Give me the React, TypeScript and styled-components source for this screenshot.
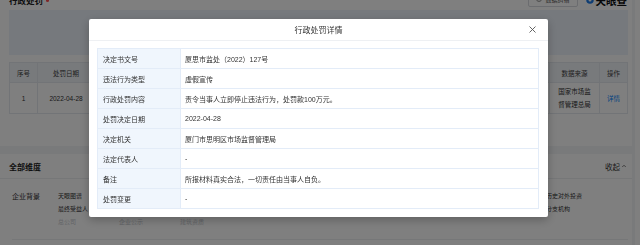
import React from "react";
import styled, { createGlobalStyle } from "styled-components";

const Global = createGlobalStyle`
  html, body { margin: 0; padding: 0; background: #f3f4f6; overflow: hidden; }
  body { font-family: "Liberation Sans", "Noto Sans CJK SC", sans-serif; color: #333; }
  * { box-sizing: border-box; }
`;

const Page = styled.div`
  display: flex;
  align-items: flex-start;
  gap: 3px;
  margin-top: -7px;
  height: 260px;
`;

const Main = styled.div`
  width: 632px;
  display: flex;
  flex-direction: column;
  gap: 8px;
`;

const Aside = styled.div`
  flex: 1;
  height: 270px;
  background: #fff;
`;

const Card = styled.div<{ $pad?: string }>`
  background: #fff;
  padding: ${(p) => p.$pad || "0"};
`;

const TitleRow = styled.div`
  height: 14px;
  display: flex;
  align-items: center;
  justify-content: space-between;
`;

const Title = styled.div`
  font-size: 8.5px;
  font-weight: 700;
  color: #222;
  display: flex;
  align-items: center;
  gap: 3px;
`;

const RedDot = styled.span`
  width: 3px;
  height: 3px;
  border-radius: 50%;
  background: #ff4d4f;
`;

const Tools = styled.div`
  display: flex;
  align-items: center;
  gap: 8px;
  padding-right: 1px;
`;

const OutlineButton = styled.div`
  height: 16px;
  margin-top: -2px;
  padding: 0 7px;
  border: 1px solid #d6d9de;
  border-radius: 2px;
  display: flex;
  align-items: center;
  gap: 3px;
  font-size: 6px;
  color: #555;
`;

const Logo = styled.div`
  display: flex;
  align-items: center;
  gap: 2px;
  font-size: 10.5px;
  font-weight: 700;
  color: #111;
`;

const FilterBox = styled.div`
  margin-top: 3px;
  height: 45px;
  background: #edf3fb;
`;

const GridTable = styled.div`
  margin-top: 7px;
  display: grid;
  grid-template-columns: 28px 57px 90px 80px 1fr 90px 50px 28px;
  border-top: 1px solid #e4e8ee;
  border-left: 1px solid #e4e8ee;
`;

const Th = styled.div`
  height: 20px;
  background: #f1f4f8;
  border-right: 1px solid #e4e8ee;
  border-bottom: 1px solid #e4e8ee;
  display: flex;
  align-items: center;
  justify-content: center;
  font-size: 6.5px;
  color: #444;
`;

const Td = styled.div<{ $link?: boolean }>`
  height: 31px;
  border-right: 1px solid #e4e8ee;
  border-bottom: 1px solid #e4e8ee;
  display: flex;
  align-items: center;
  justify-content: center;
  text-align: center;
  font-size: 6.5px;
  line-height: 13px;
  color: ${(p) => (p.$link ? "#0084ff" : "#333")};
  padding: 0 3px;
`;

const SectionHeader = styled.div`
  height: 25px;
  border-bottom: 1px solid #eceef1;
  display: flex;
  align-items: center;
  justify-content: space-between;
  padding: 0 5px 0 9px;
`;

const SectionTitle = styled.div`
  font-size: 8px;
  font-weight: 700;
  color: #222;
`;

const Collapse = styled.div`
  display: flex;
  align-items: center;
  gap: 1px;
  font-size: 7.5px;
  color: #333;
`;

const SectionBody = styled.div`
  padding: 11px 4px 20px 12px;
`;

const Group = styled.div`
  display: flex;
  padding-bottom: 10px;
  border-bottom: 1px solid #eceef1;
`;

const GroupLabel = styled.div`
  width: 46px;
  font-size: 7px;
  line-height: 13px;
  color: #333;
`;

const ItemGrid = styled.div`
  display: grid;
  grid-template-columns: repeat(9, 61px);
  grid-auto-rows: 13px;
`;

const Item = styled.div<{ $muted?: boolean }>`
  font-size: 6px;
  line-height: 13px;
  color: ${(p) => (p.$muted ? "#c4c7cc" : "#333")};
  white-space: nowrap;
`;

const Overlay = styled.div`
  position: fixed;
  inset: 0;
  background: rgba(0, 0, 0, 0.5);
  padding: 19px 0 0 89px;
`;

const Modal = styled.div`
  width: 459px;
  background: #fff;
  border-radius: 2px;
  box-shadow: 0 3px 10px rgba(0, 0, 0, 0.25);
`;

const ModalHeader = styled.div`
  position: relative;
  height: 22px;
  border-bottom: 1px solid #eef0f3;
  display: flex;
  align-items: center;
  justify-content: center;
  font-size: 8px;
  color: #333;
`;

const Close = styled.div`
  position: absolute;
  right: 12px;
  top: 7px;
  width: 7px;
  height: 7px;
  display: flex;
`;

const ModalBody = styled.div`
  padding: 7px 9px 8px 8px;
`;

const DetailTable = styled.div`
  display: grid;
  grid-template-columns: 83px 1fr;
  border-top: 1px solid #e3ecf8;
  border-left: 1px solid #e3ecf8;
`;

const DCell = styled.div<{ $label?: boolean }>`
  height: 20px;
  border-right: 1px solid #e3ecf8;
  border-bottom: 1px solid #e3ecf8;
  background: ${(p) => (p.$label ? "#f0f6fd" : "#fff")};
  display: flex;
  align-items: center;
  padding-left: ${(p) => (p.$label ? "5px" : "4px")};
  font-size: 7px;
  color: #333;
  white-space: nowrap;
`;

const details: [string, string][] = [
  ["决定书文号", "厦思市监处（2022）127号"],
  ["违法行为类型", "虚假宣传"],
  ["行政处罚内容", "责令当事人立即停止违法行为，处罚款100万元。"],
  ["处罚决定日期", "2022-04-28"],
  ["决定机关", "厦门市思明区市场监督管理局"],
  ["法定代表人", "-"],
  ["备注", "所报材料真实合法，一切责任由当事人自负。"],
  ["处罚变更", "-"],
];

const headers = ["序号", "处罚日期", "决定书文号", "违法行为类型", "行政处罚内容", "决定机关", "数据来源", "操作"];

const row1 = ["天眼图谱", "股东信息", "主要人员", "对外投资", "变更记录", "公司年报", "实际控制人", "疑似关系", "历史对外投资"];
const row2 = ["最终受益人", "分支机构", "工商信息", "控股企业", "股权穿透", "历史股东", "司法风险", "经营状况", "分支机构"];
const row3 = ["总公司", "企业公示", "建筑资质"];

export default function App() {
  return (
    <>
      <Global />
      <Page>
        <Main>
          <Card $pad="0 4px 32px 9px">
            <TitleRow>
              <Title>
                行政处罚
                <RedDot />
              </Title>
              <Tools>
                <OutlineButton>
                  <svg width="6" height="6" viewBox="0 0 12 12">
                    <circle cx="6" cy="6" r="5" fill="none" stroke="#666" strokeWidth="1.3" />
                    <path d="M6 3v3.5M6 8.3v.7" stroke="#666" strokeWidth="1.3" />
                  </svg>
                  数据纠错
                </OutlineButton>
                <Logo>
                  <svg width="8" height="8" viewBox="0 0 16 16">
                    <circle cx="8" cy="8" r="7.5" fill="#1e7be6" />
                    <circle cx="8" cy="8" r="3" fill="#fff" />
                  </svg>
                  天眼查
                </Logo>
              </Tools>
            </TitleRow>
            <FilterBox />
            <GridTable>
              {headers.map((h) => (
                <Th key={h}>{h}</Th>
              ))}
              <Td>1</Td>
              <Td>2022-04-28</Td>
              <Td>厦思市监处（2022）127号</Td>
              <Td>虚假宣传</Td>
              <Td>责令当事人立即停止违法行为，处罚款100万元。</Td>
              <Td>厦门市思明区市场监督管理局</Td>
              <Td>
                国家市场监
                <br />
                督管理总局
              </Td>
              <Td $link>详情</Td>
            </GridTable>
          </Card>
          <Card>
            <SectionHeader>
              <SectionTitle>全部维度</SectionTitle>
              <Collapse>
                收起
                <svg width="6" height="6" viewBox="0 0 12 12">
                  <path d="M2.5 8l3.5-3.5L9.5 8" fill="none" stroke="#444" strokeWidth="1.4" />
                </svg>
              </Collapse>
            </SectionHeader>
            <SectionBody>
              <Group>
                <GroupLabel>企业背景</GroupLabel>
                <ItemGrid>
                  {row1.map((t, i) => (
                    <Item key={"a" + i}>{t}</Item>
                  ))}
                  {row2.map((t, i) => (
                    <Item key={"b" + i}>{t}</Item>
                  ))}
                  {row3.map((t, i) => (
                    <Item key={"c" + i} $muted>
                      {t}
                    </Item>
                  ))}
                </ItemGrid>
              </Group>
            </SectionBody>
          </Card>
        </Main>
        <Aside />
      </Page>
      <Overlay>
        <Modal>
          <ModalHeader>
            行政处罚详情
            <Close>
              <svg width="7" height="7" viewBox="0 0 7 7">
                <path d="M0.5 0.5l6 6M6.5 0.5l-6 6" stroke="#555" strokeWidth="0.9" />
              </svg>
            </Close>
          </ModalHeader>
          <ModalBody>
            <DetailTable>
              {details.map(([k, v]) => (
                <React.Fragment key={k}>
                  <DCell $label>{k}</DCell>
                  <DCell>{v}</DCell>
                </React.Fragment>
              ))}
            </DetailTable>
          </ModalBody>
        </Modal>
      </Overlay>
    </>
  );
}
